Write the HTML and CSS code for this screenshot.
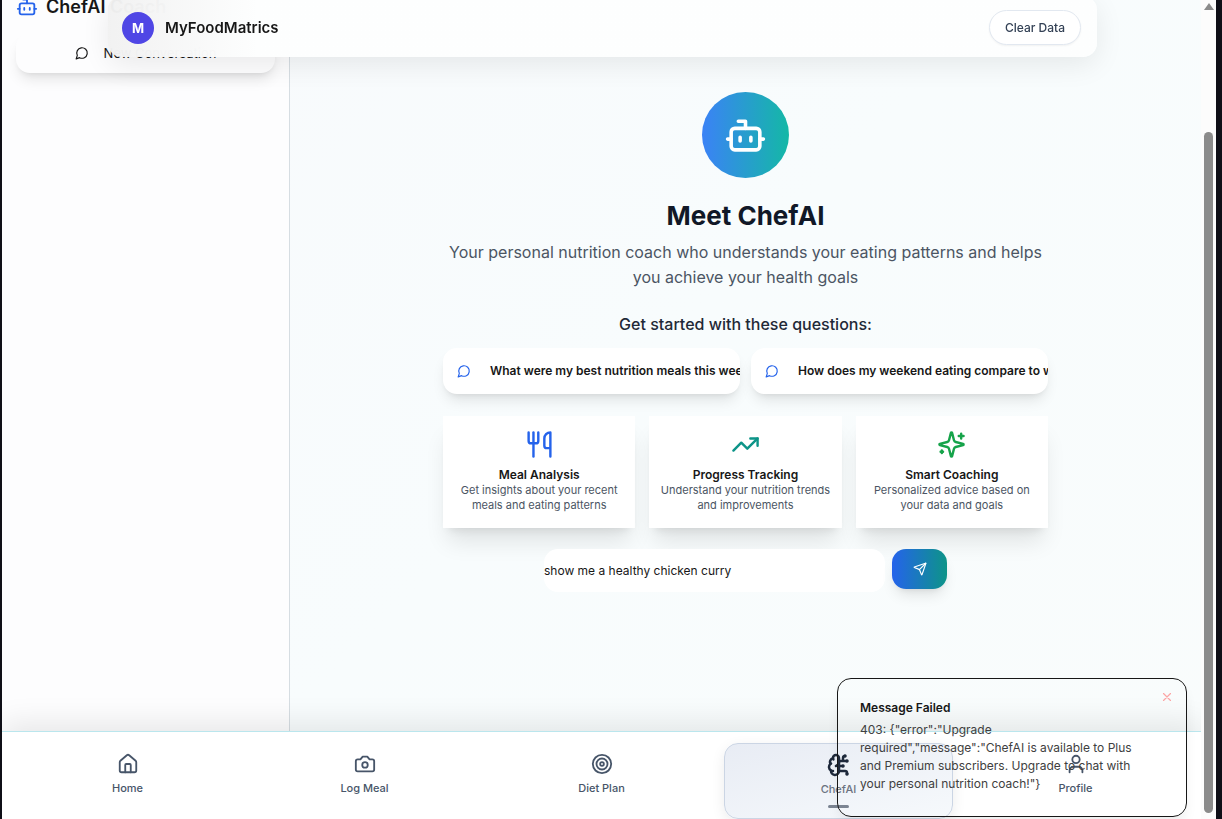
FILE: index.html
```html
<!DOCTYPE html>
<html lang="en">
<head>
<meta charset="utf-8">
<meta name="viewport" content="width=device-width, initial-scale=1">
<title>MyFoodMatrics – ChefAI</title>
<link rel="stylesheet" href="styles.css">
</head>
<body>
<div class="window">
  <div class="app">
    <header class="topbar">
      <span class="logo">M</span>
      <span class="brand">MyFoodMatrics</span>
      <button class="clear" type="button">Clear Data</button>
    </header>

    <div class="content">
      <aside class="sidebar">
        <h2 class="side-title">
          <svg class="icon icon-md blue" viewBox="0 0 24 24"><path d="M12 8V4H8"/><rect width="16" height="12" x="4" y="8" rx="2"/><path d="M2 14h2M20 14h2M15 13v2M9 13v2"/></svg>
          ChefAI Coach
        </h2>
        <button class="new-chat" type="button">
          <svg class="icon icon-sm" viewBox="0 0 24 24"><path d="M7.9 20A9 9 0 1 0 4 16.1L2 22Z"/></svg>
          New Conversation
        </button>
      </aside>

      <main class="main">
        <div class="intro">
          <div class="avatar">
            <svg class="icon icon-xl" viewBox="0 0 24 24"><path d="M12 8V4H8"/><rect width="16" height="12" x="4" y="8" rx="2"/><path d="M2 14h2M20 14h2M15 13v2M9 13v2"/></svg>
          </div>
          <h1 class="title">Meet ChefAI</h1>
          <p class="subtitle">Your personal nutrition coach who understands your eating patterns and helps you achieve your health goals</p>
          <h3 class="prompt">Get started with these questions:</h3>

          <div class="questions">
            <button class="question" type="button">
              <svg class="icon icon-sm blue" viewBox="0 0 24 24"><path d="M7.9 20A9 9 0 1 0 4 16.1L2 22Z"/></svg>
              <span>What were my best nutrition meals this week?</span>
            </button>
            <button class="question" type="button">
              <svg class="icon icon-sm blue" viewBox="0 0 24 24"><path d="M7.9 20A9 9 0 1 0 4 16.1L2 22Z"/></svg>
              <span>How does my weekend eating compare to weekdays?</span>
            </button>
          </div>

          <div class="features">
            <section class="feature">
              <svg class="icon icon-lg blue" viewBox="0 0 24 24"><path d="M3 2v7c0 1.1.9 2 2 2h4a2 2 0 0 0 2-2V2"/><path d="M7 2v20"/><path d="M21 15V2a5 5 0 0 0-5 5v6c0 1.1.9 2 2 2h3Zm0 0v7"/></svg>
              <h4>Meal Analysis</h4>
              <p>Get insights about your recent meals and eating patterns</p>
            </section>
            <section class="feature">
              <svg class="icon icon-lg teal" viewBox="0 0 24 24"><path d="M22 7 13.5 15.500 8.500 10.500 2 17"/><path d="M16 7h6v6"/></svg>
              <h4>Progress Tracking</h4>
              <p>Understand your nutrition trends and improvements</p>
            </section>
            <section class="feature">
              <svg class="icon icon-lg green" viewBox="0 0 24 24"><path d="M9.937 15.5A2 2 0 0 0 8.5 14.063l-6.135-1.582a.5.5 0 0 1 0-.962L8.5 9.936A2 2 0 0 0 9.937 8.5l1.582-6.135a.5.5 0 0 1 .963 0L14.063 8.5A2 2 0 0 0 15.5 9.937l6.135 1.581a.5.5 0 0 1 0 .964L15.5 14.063a2 2 0 0 0-1.437 1.437l-1.582 6.135a.5.5 0 0 1-.963 0z"/><path d="M20 3v4M22 5h-4M4 17v2M5 18H3"/></svg>
              <h4>Smart Coaching</h4>
              <p>Personalized advice based on your data and goals</p>
            </section>
          </div>

          <form class="composer">
            <input class="message" type="text" aria-label="Message" value="show me a healthy chicken curry">
            <button class="send" type="button" aria-label="Send">
              <svg class="icon icon-sm" viewBox="0 0 24 24"><path d="M14.536 21.686a.5.5 0 0 0 .937-.024l6.500-19a.496.496 0 0 0-.635-.635l-19 6.500a.5.5 0 0 0-.024.937l7.930 3.180a2 2 0 0 1 1.112 1.110z"/><path d="m21.854 2.147-10.940 10.939"/></svg>
            </button>
          </form>
        </div>
      </main>
    </div>

    <nav class="tabs">
      <a class="tab" href="#home">
        <svg class="icon icon-md" viewBox="0 0 24 24"><path d="M15 21v-8a1 1 0 0 0-1-1h-4a1 1 0 0 0-1 1v8"/><path d="M3 10a2 2 0 0 1 .709-1.528l7-5.999a2 2 0 0 1 2.582 0l7 5.999A2 2 0 0 1 21 10v9a2 2 0 0 1-2 2H5a2 2 0 0 1-2-2z"/></svg>
        Home
      </a>
      <a class="tab" href="#log">
        <svg class="icon icon-md" viewBox="0 0 24 24"><path d="M14.5 4h-5L7 7H4a2 2 0 0 0-2 2v9a2 2 0 0 0 2 2h16a2 2 0 0 0 2-2V9a2 2 0 0 0-2-2h-3l-2.500-3z"/><circle cx="12" cy="13" r="3"/></svg>
        Log Meal
      </a>
      <a class="tab" href="#diet">
        <svg class="icon icon-md" viewBox="0 0 24 24"><circle cx="12" cy="12" r="10"/><circle cx="12" cy="12" r="6"/><circle cx="12" cy="12" r="2"/></svg>
        Diet Plan
      </a>
      <a class="tab active" href="#chef" aria-current="page">
        <svg class="icon icon-brain" viewBox="0 0 24 24"><path d="M12 5a3 3 0 1 0-5.997.125 4 4 0 0 0-2.526 5.770 4 4 0 0 0 .556 6.588A4 4 0 1 0 12 18Z"/><path d="M9 13a4.500 4.500 0 0 0 3-4"/><path d="M6.003 5.125A3 3 0 0 0 6.401 6.500"/><path d="M3.477 10.896a4 4 0 0 1 .585-.396"/><path d="M6 18a4 4 0 0 1-1.967-.516"/><path d="M12 13h4M12 18h6a2 2 0 0 1 2 2v1M12 8h8M16 8V5a2 2 0 0 1 2-2"/><circle cx="16" cy="13" r=".5"/><circle cx="18" cy="3" r=".5"/><circle cx="20" cy="21" r=".5"/><circle cx="20" cy="8" r=".5"/></svg>
        ChefAI
        <span class="marker"></span>
      </a>
      <a class="tab" href="#profile">
        <svg class="icon icon-md" viewBox="0 0 24 24"><path d="M19 21v-2a4 4 0 0 0-4-4H9a4 4 0 0 0-4 4v2"/><circle cx="12" cy="7" r="4"/></svg>
        Profile
      </a>
    </nav>

    <div class="toast" role="alert">
      <strong>Message Failed</strong>
      <p>403: {"error":"Upgrade required","message":"ChefAI is available to Plus and Premium subscribers. Upgrade to chat with your personal nutrition coach!"}</p>
      <button class="dismiss" type="button" aria-label="Close">
        <svg class="icon icon-sm" viewBox="0 0 24 24"><path d="M18 6 6 18M6 6l12 12"/></svg>
      </button>
    </div>
  </div>

  <div class="scrollbar" aria-hidden="true">
    <span class="arrow"></span>
    <span class="thumb"></span>
  </div>
</div>
</body>
</html>
```

FILE: styles.css
```css
* { box-sizing: border-box; margin: 0; }

body {
  font-family: Inter, "Liberation Sans", sans-serif;
  font-size: 12px;
  line-height: 18px;
  color: #171717;
  background: #0f0f17;
}

button, input { font: inherit; color: inherit; border: 0; }
button { cursor: pointer; }

.window {
  display: flex;
  height: 100vh;
  padding: 0 6px 0 2px;
  overflow: hidden;
}

.app {
  position: relative;
  display: flex;
  flex: 1;
  flex-direction: column;
  min-width: 0;
  overflow: hidden;
  background: linear-gradient(135deg, #f8fafc, #f8fcfd 50%, #f9fcfc);
}

.icon {
  flex: none;
  fill: none;
  stroke: currentColor;
  stroke-width: 2;
  stroke-linecap: round;
  stroke-linejoin: round;
}
.icon-sm { width: 14px; height: 14px; }
.icon-md { width: 22px; height: 22px; }
.icon-brain { width: 24px; height: 24px; stroke-width: 2.5; }
.icon-lg { width: 29px; height: 29px; }
.icon-xl { width: 43px; height: 43px; }
.blue { color: #2563eb; }
.teal { color: #0d9488; }
.green { color: #16a34a; }

/* Floating header */
.topbar {
  position: absolute;
  z-index: 3;
  top: -4px;
  left: 2px;
  right: 0;
  display: flex;
  align-items: center;
  gap: 11px;
  width: calc(100% - 210px);
  max-width: 1152px;
  height: 61px;
  margin: 0 auto;
  padding: 2px 16px 0 14px;
  border-radius: 14px;
  background: linear-gradient(90deg, rgba(241, 241, 241, 0.96), rgba(253, 254, 254, 0.96) 150px);
  backdrop-filter: blur(22px);
  box-shadow: 0 8px 28px rgba(0, 0, 0, 0.08);
}
.logo {
  display: grid;
  place-items: center;
  width: 32px;
  height: 32px;
  border-radius: 50%;
  background: #4f46e5;
  color: #fff;
  font-size: 13px;
  font-weight: 700;
}
.brand { font-size: 15px; font-weight: 600; }
.clear {
  height: 35px;
  margin-left: auto;
  padding: 0 15px;
  border: 1px solid #e2e8f0;
  border-radius: 18px;
  background: #fff;
  color: #334155;
  font-weight: 500;
  box-shadow: 0 1px 2px rgba(0, 0, 0, 0.05);
}

.content { display: flex; flex: 1; min-height: 0; }

/* Conversation list */
.sidebar {
  flex: none;
  width: 288px;
  padding: 0 14px;
  border-right: 1px solid #d6dde2;
  background: #fdfdfe;
}
.side-title {
  display: flex;
  align-items: center;
  gap: 8px;
  height: 28px;
  margin: -7px 0 12px;
  font-size: 18px;
  font-weight: 600;
}
.new-chat {
  display: flex;
  align-items: center;
  justify-content: center;
  gap: 15px;
  width: 100%;
  height: 40px;
  border-radius: 14px;
  background: #fdfdfe;
  font-size: 13px;
  box-shadow: 0 9px 14px -3px rgba(0, 0, 0, 0.1), 0 4px 6px -4px rgba(0, 0, 0, 0.1);
}

/* Welcome panel */
.main { flex: 1; min-width: 0; padding: 92px 16px 0; }
.intro {
  display: flex;
  flex-direction: column;
  align-items: center;
  max-width: 605px;
  margin: 0 auto;
  text-align: center;
}
.avatar {
  display: grid;
  place-items: center;
  width: 87px;
  height: 86px;
  border-radius: 50%;
  background: linear-gradient(90deg, #3b82f6, #14b8a6);
  color: #fff;
}
.title {
  margin-top: 22px;
  font-size: 26px;
  font-weight: 700;
  line-height: 32px;
  color: #111827;
}
.subtitle { margin-top: 8px; font-size: 16px; line-height: 25px; color: #4b5563; }
.prompt { margin-top: 22px; font-size: 16px; font-weight: 500; line-height: 25px; color: #1f2937; }

.questions {
  display: grid;
  grid-template-columns: 1fr 1fr;
  gap: 11px;
  width: 100%;
  margin-top: 11px;
}
.question {
  display: flex;
  align-items: center;
  gap: 19px;
  height: 46px;
  padding: 0 0 0 14px;
  overflow: hidden;
  border-radius: 14px;
  background: #fff;
  font-weight: 600;
  white-space: nowrap;
  box-shadow: 0 9px 14px -3px rgba(0, 0, 0, 0.1), 0 4px 6px -4px rgba(0, 0, 0, 0.1);
}

.features {
  display: grid;
  grid-template-columns: repeat(3, 1fr);
  gap: 14px;
  width: 100%;
  margin-top: 22px;
}
.feature {
  padding: 14px 10px 15px;
  background: #fff;
  box-shadow: 0 18px 22px -5px rgba(0, 0, 0, 0.1), 0 7px 9px -6px rgba(0, 0, 0, 0.1);
}
.feature .icon { display: block; margin: 0 auto 7px; }
.feature h4 { font-size: 12px; font-weight: 600; line-height: 17px; }
.feature p { font-size: 11px; line-height: 15px; color: #4b5563; }

.composer {
  display: flex;
  align-items: flex-start;
  gap: 7px;
  width: 403px;
  max-width: 100%;
  margin-top: 21px;
}
.message {
  flex: 1;
  min-width: 0;
  height: 43px;
  padding: 0;
  border-radius: 14px;
  background: #fff;
  outline: 0;
}
.send {
  display: grid;
  place-items: center;
  width: 55px;
  height: 40px;
  border-radius: 14px;
  background: linear-gradient(90deg, #2563eb, #0d9488);
  color: #fff;
  box-shadow: 0 9px 14px -3px rgba(0, 0, 0, 0.1), 0 4px 6px -4px rgba(0, 0, 0, 0.1);
}

/* Bottom navigation */
.tabs {
  position: relative;
  display: grid;
  grid-template-columns: repeat(5, 1fr);
  gap: 8px;
  height: 88px;
  padding: 11px 11px 0;
  border-top: 1px solid #bae6ed;
  background: #fff;
  box-shadow: 0 -8px 28px rgba(0, 0, 0, 0.09);
}
.tab {
  display: flex;
  flex-direction: column;
  align-items: center;
  gap: 5px;
  padding-top: 10px;
  font-size: 11px;
  font-weight: 500;
  line-height: 16px;
  color: #475569;
  text-decoration: none;
}
.tab.active {
  gap: 4px;
  padding-top: 9px;
  border: 1px solid #cbd5e4;
  border-radius: 14px;
  background: linear-gradient(165deg, #e8ecf4, #f6f9fc);
  color: #6b7280;
  box-shadow: 0 4px 14px rgba(0, 0, 0, 0.08);
}
.tab.active .icon { color: #1e293b; }
.marker { width: 21px; height: 3px; margin-top: 4px; border-radius: 2px; background: #7b8492; }

/* Notification */
.toast {
  position: absolute;
  z-index: 4;
  right: 14px;
  bottom: 2px;
  width: 350px;
  padding: 20px 46px 23px 22px;
  border: 1px solid #171717;
  border-radius: 14px;
  box-shadow: 0 9px 14px -3px rgba(0, 0, 0, 0.08);
}
.toast strong { display: block; font-weight: 600; }
.toast p { margin-top: 4px; color: #404040; }
.dismiss {
  position: absolute;
  top: 11px;
  right: 12px;
  display: grid;
  padding: 0;
  background: none;
  color: #fca5a5;
}

/* Page scrollbar */
.scrollbar {
  display: flex;
  flex: none;
  flex-direction: column;
  align-items: center;
  width: 15px;
  padding: 3px 0 6px;
  background: #fcfcfc;
}
.arrow {
  border: 5px solid transparent;
  border-top: 0;
  border-bottom: 7px solid #8b8b8b;
}
.thumb { width: 9px; flex: 1; margin-top: 122px; border-radius: 5px; background: #8b8b8b; }
```
